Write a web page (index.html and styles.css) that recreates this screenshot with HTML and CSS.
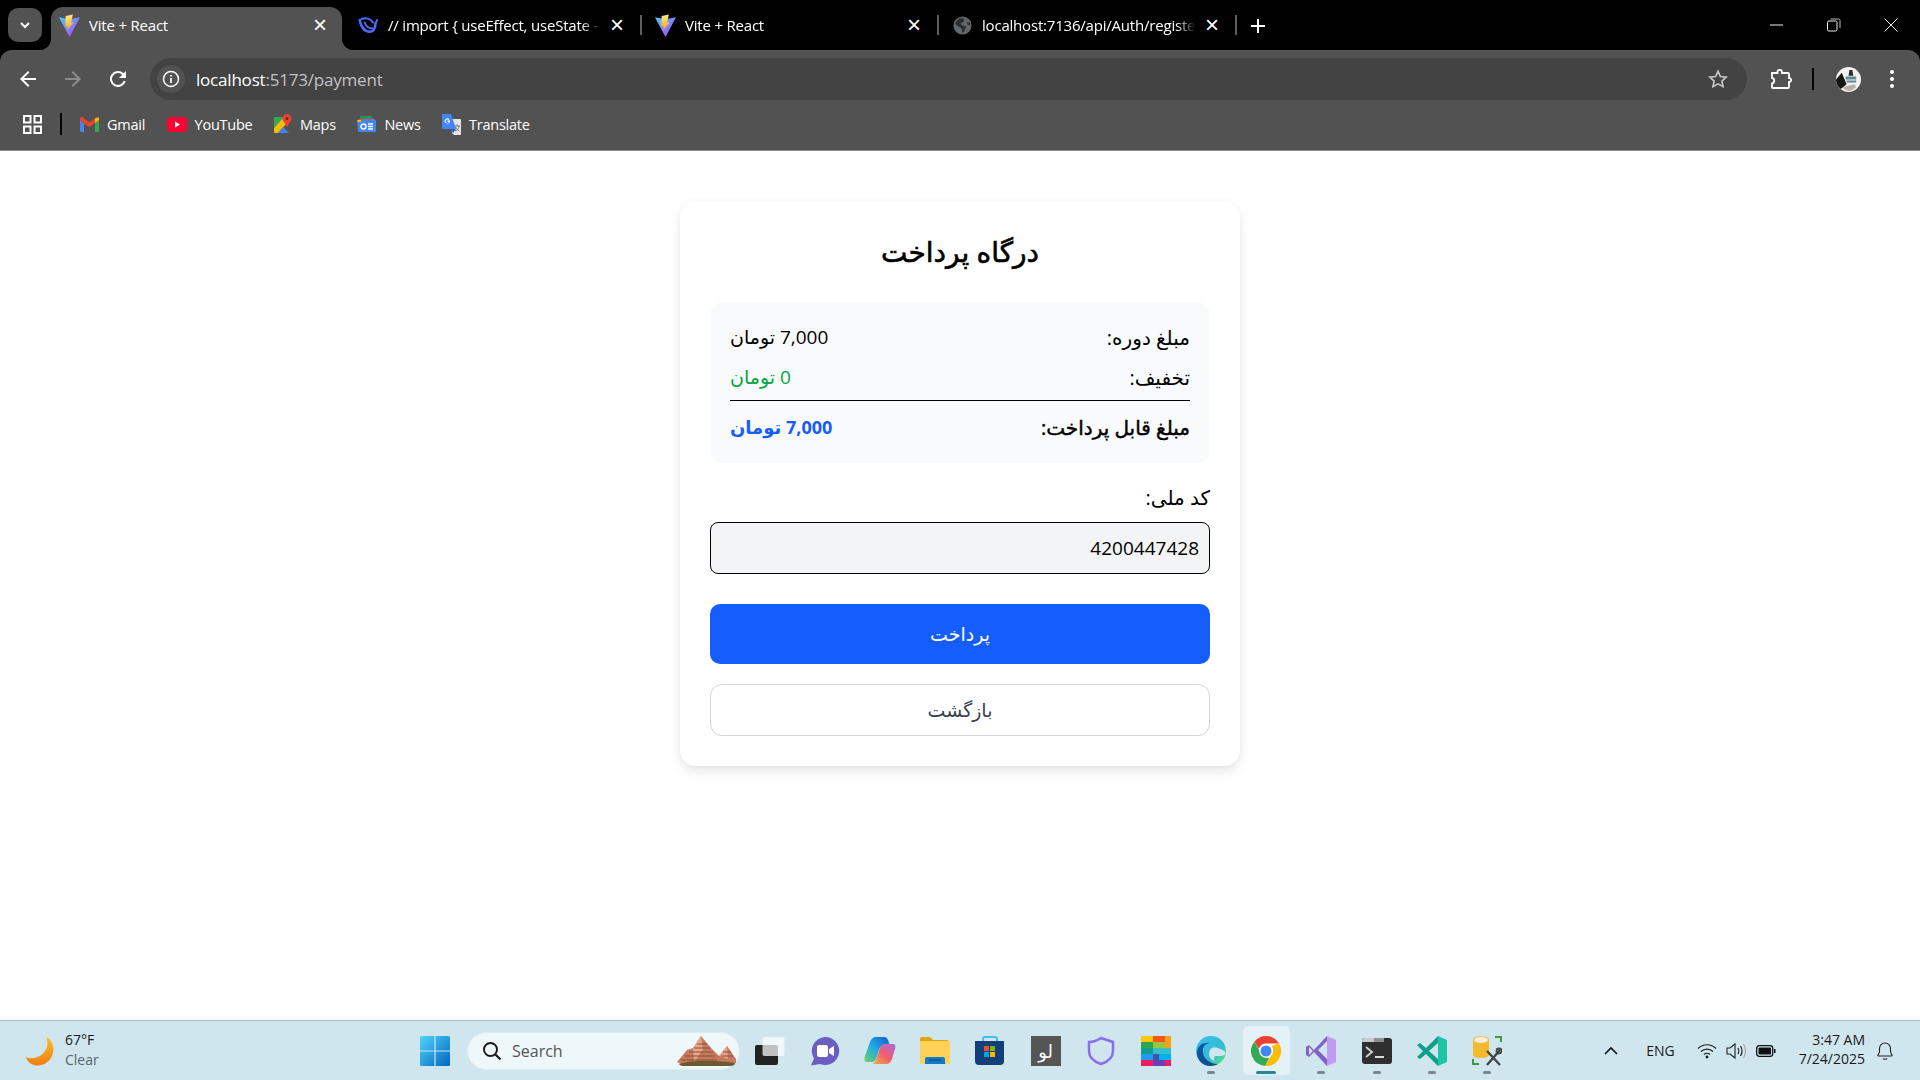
FILE: index.html
```html
<!DOCTYPE html>
<html lang="en">
<head>
    <meta charset="UTF-8">
    <meta name="viewport" content="width=device-width, initial-scale=1.0">
    <title>Vite + React</title>
    <link rel="stylesheet" href="styles.css">
</head>
<body>
    <svg class="defs" width="0" height="0">
        <defs>
            <linearGradient id="viteBody" x1="0" y1="0" x2="1" y2="1">
                <stop offset="0" stop-color="#41d1ff"/>
                <stop offset="1" stop-color="#bd34fe"/>
            </linearGradient>
            <linearGradient id="viteBolt" x1="0" y1="0" x2="0" y2="1">
                <stop offset="0" stop-color="#ffea83"/>
                <stop offset="1" stop-color="#ffa800"/>
            </linearGradient>
            <symbol id="vite" viewBox="0 0 24 24">
                <path d="M1 3.500 12 5.500 23 3.500 12.300 23.500Q12 24 11.700 23.500z" fill="url(#viteBody)"/>
                <path d="M15.500 0.500 8 2 7.600 13 10.200 12.400 9.400 17 16.500 8.500 13.600 9z" fill="url(#viteBolt)"/>
            </symbol>
        </defs>
    </svg>

    <header class="browser">
        <div class="tabstrip">
            <button class="tab-search">
                <svg width="14" height="14" viewBox="0 0 14 14"><path d="M3 5l4 4 4-4" fill="none" stroke="#fff" stroke-width="2"/></svg>
            </button>
            <div class="tab active">
                <svg class="favicon vite-icon" width="23" height="23"><use href="#vite"/></svg>
                <span class="tab-title">Vite + React</span>
                <span class="tab-close">&times;</span>
            </div>
            <div class="tab second">
                <svg class="favicon" width="20" height="20" viewBox="0 0 24 24">
                    <g fill="none" stroke="#4d6bfe" stroke-linecap="round">
                        <path d="M2 6c1 8 6 14 12 14 5 0 7-5 7-10" stroke-width="3"/>
                        <path d="M4 5c5-2 11-1 14 4" stroke-width="2.400"/>
                        <path d="M8 9c2 5 5 7 9 7" stroke-width="2.400"/>
                        <path d="M21 10l2-4" stroke-width="2.400"/>
                    </g>
                </svg>
                <span class="tab-title">// import { useEffect, useState -</span>
                <span class="tab-close">&times;</span>
            </div>
            <div class="tab third">
                <svg class="favicon vite-icon" width="23" height="23"><use href="#vite"/></svg>
                <span class="tab-title">Vite + React</span>
                <span class="tab-close">&times;</span>
            </div>
            <div class="tab fourth">
                <svg class="favicon" width="19" height="19" viewBox="0 0 20 20">
                    <circle cx="10" cy="10" r="9.500" fill="#63666a"/>
                    <path d="M7 2l5 1-1 3-3 2 2 2 4 1-2 5-2 2-1-5-5-3-2-2 3-4zM15 6l3 1 0 3-3-1z" fill="#000" opacity=".55"/>
                </svg>
                <span class="tab-title">localhost:7136/api/Auth/registe</span>
                <span class="tab-close">&times;</span>
            </div>
            <span class="tab-plus">
                <svg width="16" height="16" viewBox="0 0 16 16"><path d="M8 1v14M1 8h14" stroke="#fff" stroke-width="2"/></svg>
            </span>
            <div class="win-controls">
                <svg width="14" height="14" viewBox="0 0 14 14"><path d="M0 7h13" stroke="#eee" stroke-width="1"/></svg>
                <svg width="14" height="14" viewBox="0 0 14 14"><rect x=".5" y="3" width="9.500" height="10" rx="1.500" fill="none" stroke="#eee"/><path d="M3.500 1h8a2 2 0 0 1 1.500 1.500V10" fill="none" stroke="#bbb"/></svg>
                <svg width="14" height="14" viewBox="0 0 14 14"><path d="M.5.500l13 13M13.500.500l-13 13" stroke="#eee" stroke-width="1"/></svg>
            </div>
        </div>

        <div class="toolbar">
            <div class="nav-btns">
                <svg width="24" height="24" viewBox="0 0 24 24"><path d="M20 11H7.800l5.600-5.600L12 4l-8 8 8 8 1.400-1.400L7.800 13H20z" fill="#fff"/></svg>
                <svg width="24" height="24" viewBox="0 0 24 24"><path d="M4 11h12.200l-5.600-5.600L12 4l8 8-8 8-1.400-1.400 5.600-5.600H4z" fill="#8b8b8b"/></svg>
                <svg width="24" height="24" viewBox="0 0 24 24"><path d="M17.650 6.350A8 8 0 1 0 19.730 14h-2.080a6 6 0 1 1-1.410-6.240L13 11h7V4z" fill="#fff"/></svg>
            </div>
            <div class="omnibox">
                <span class="site-info">
                    <svg width="18" height="18" viewBox="0 0 18 18"><circle cx="9" cy="9" r="7.500" fill="none" stroke="#fff" stroke-width="1.500"/><path d="M9 8v5M9 5v1.600" stroke="#fff" stroke-width="1.700"/></svg>
                </span>
                <span class="url"><span class="host">localhost</span>:5173/payment</span>
                <svg class="star" width="22" height="22" viewBox="0 0 24 24"><path d="M12 3.500l2.600 5.800 6.300.7-4.700 4.200 1.300 6.200L12 17.300l-5.500 3.100 1.300-6.200L3.100 10l6.300-.7z" fill="none" stroke="#c7c7c7" stroke-width="1.800"/></svg>
            </div>
            <div class="tool-right">
                <svg width="22" height="22" viewBox="0 0 22 22"><path d="M2 5h5.500V4a2.200 2.200 0 0 1 4.400 0v1H18a1 1 0 0 1 1 1v4.200h1a2 2 0 0 1 0 3.600h-1V19a1 1 0 0 1-1 1H3a1 1 0 0 1-1-1v-3.500a2.800 2.800 0 0 0 0-5.500z" fill="none" stroke="#fff" stroke-width="1.800"/></svg>
                <i class="tool-sep"></i>
                <svg class="avatar" width="25" height="25" viewBox="0 0 26 26">
                    <circle cx="13" cy="13" r="13" fill="#f2f2f0"/>
                    <path d="M0 13L6 6l5 12-6 5Q0 19 0 13z" fill="#151515"/>
                    <path d="M10 10h11v3H10zM11 14h10v2H11z" fill="#5d8b94"/>
                    <path d="M14 3l3 0 1 6h-5z" fill="#2a2a2a"/>
                    <path d="M7 21l12-3 2 3-6 4q-5 0-8-4z" fill="#b9aea8"/>
                </svg>
                <svg width="6" height="20" viewBox="0 0 6 20"><circle cx="3" cy="3" r="2" fill="#fff"/><circle cx="3" cy="10" r="2" fill="#fff"/><circle cx="3" cy="17" r="2" fill="#fff"/></svg>
            </div>
        </div>

        <div class="bookmarks">
            <svg class="apps" width="19" height="19" viewBox="0 0 19 19"><g fill="none" stroke="#fff" stroke-width="2"><rect x="1" y="1" width="6.500" height="6.500"/><rect x="11.500" y="1" width="6.500" height="6.500"/><rect x="1" y="11.500" width="6.500" height="6.500"/><rect x="11.500" y="11.500" width="6.500" height="6.500"/></g></svg>
            <i class="bm-sep"></i>
            <a class="bm">
                <svg width="19" height="15" viewBox="0 0 19 15"><path d="M0 3v10.500A1.500 1.500 0 0 0 1.500 15H4V6z" fill="#4285f4"/><path d="M15 15h2.500a1.500 1.500 0 0 0 1.500-1.500V3l-4 3z" fill="#34a853"/><path d="M4 7L0 3V2c0-1.800 2-2.500 3-1.500L9.500 5.500 16 .5c1-1 3-.3 3 1.500v1l-9.500 7z" fill="#ea4335"/><path d="M15 1.500L19 .5V3l-4 3z" fill="#fbbc04"/></svg>
                Gmail
            </a>
            <a class="bm">
                <svg width="20" height="15" viewBox="0 0 20 15"><rect width="20" height="15" rx="4" fill="#ff0033"/><path d="M8 4.500v6l5-3z" fill="#fff"/></svg>
                YouTube
            </a>
            <a class="bm">
                <svg width="18" height="20" viewBox="0 0 18 20"><path d="M0 3h10L0 14z" fill="#34a853"/><path d="M0 14L10 3l3 6L4 19H1a1 1 0 0 1-1-1z" fill="#fbbc04"/><path d="M4 19l5-6 6 6z" fill="#4285f4"/><path d="M13 0a4.500 4.500 0 0 1 4.500 4.500c0 3-3 4.500-4.500 9-1.500-4.500-4.500-6-4.500-9A4.500 4.500 0 0 1 13 0z" fill="#ea4335"/><circle cx="13" cy="4.500" r="1.600" fill="#8a1f14"/></svg>
                Maps
            </a>
            <a class="bm">
                <svg width="19" height="18" viewBox="0 0 19 18"><path d="M3 1h12v4H3z" fill="#0c9d58"/><path d="M1 4l15-1 3 3-17 2z" fill="#ea4335"/><path d="M0 5l17-1 2 2v10a1 1 0 0 1-1 1H2a1 1 0 0 1-1-1z" fill="#4285f4"/><path d="M0 5h4v2H1z" fill="#fbbc04"/><path d="M11 9h5M11 11.500h5M11 14h5" stroke="#fff" stroke-width="1.300"/><circle cx="6.500" cy="11.500" r="2.500" fill="none" stroke="#fff" stroke-width="1.400"/></svg>
                News
            </a>
            <a class="bm">
                <svg width="19" height="21" viewBox="0 0 19 21"><path d="M9 5h9a1 1 0 0 1 1 1v14a1 1 0 0 1-1 1h-6l-2-2z" fill="#e4e4e4"/><path d="M1 0h8l5 15H1a1 1 0 0 1-1-1V1a1 1 0 0 1 1-1z" fill="#4285f4"/><path d="M9 15h5l-3 4z" fill="#2a56c6"/><path d="M8 6.500H5.500v1.500h1.400c-.2.800-1 1.200-1.700 1a1.800 1.800 0 0 1 0-3.500c.5 0 .9.100 1.200.5l1-1A3 3 0 0 0 2.500 7.500 3 3 0 0 0 8 8z" fill="#fff"/><path d="M12 12h6M15 10.500V12M13 17c3-1 4-3 4-5M13.500 13c1 2 2.500 3 4 4" fill="none" stroke="#777" stroke-width="1"/></svg>
                Translate
            </a>
        </div>
    </header>

    <main class="page">
        <div class="card" dir="rtl">
            <h2 class="card-title">درگاه پرداخت</h2>
            <div class="summary">
                <div class="row">
                    <span class="row-label">مبلغ دوره:</span>
                    <span>7,000 تومان</span>
                </div>
                <div class="row">
                    <span class="row-label">تخفیف:</span>
                    <span class="green">0 تومان</span>
                </div>
                <div class="row total">
                    <span class="row-label">مبلغ قابل پرداخت:</span>
                    <span class="blue">7,000 تومان</span>
                </div>
            </div>
            <label class="field-label" for="nationalCode">کد ملی:</label>
            <input class="field" id="nationalCode" type="text" value="4200447428" readonly>
            <button class="btn-pay">پرداخت</button>
            <button class="btn-back">بازگشت</button>
        </div>
    </main>

    <footer class="taskbar">
        <div class="weather">
            <svg width="30" height="30" viewBox="0 0 30 30">
                <defs><linearGradient id="moon" x1="0" y1="0" x2="0" y2="1"><stop offset="0" stop-color="#fcc02e"/><stop offset="1" stop-color="#ef7d12"/></linearGradient></defs>
                <path d="M21 1c7 3 9 12 6 19-3 7-11 11-18 9-4-1-7-4-8-8 7 3 15 0 19-6 3-5 3-10 1-14z" fill="url(#moon)"/>
            </svg>
            <div class="weather-text">
                <span>67°F</span>
                <span class="muted">Clear</span>
            </div>
        </div>

        <div class="task-center">
            <span class="win-logo">
                <svg width="30" height="30" viewBox="0 0 30 30">
                    <defs><linearGradient id="win" x1="0" y1="0" x2="1" y2="1"><stop offset="0" stop-color="#52d3fb"/><stop offset="1" stop-color="#0067c0"/></linearGradient></defs>
                    <path d="M0 1.500A1.500 1.500 0 0 1 1.500 0h12.900v14.400H0zM15.600 0h12.900A1.500 1.500 0 0 1 30 1.500v12.900H15.600zM0 15.600h14.400V30H1.500A1.500 1.500 0 0 1 0 28.500zM15.600 15.600H30v12.900a1.500 1.500 0 0 1-1.500 1.500H15.600z" fill="url(#win)"/>
                </svg>
            </span>
            <div class="search">
                <svg width="20" height="20" viewBox="0 0 20 20"><circle cx="8.500" cy="8.500" r="6.500" fill="none" stroke="#1a1a1a" stroke-width="2"/><path d="M13 13l5.500 5.500" stroke="#1a1a1a" stroke-width="2.200"/></svg>
                <span class="search-text">Search</span>
                <svg class="search-art" width="60" height="32" viewBox="0 0 60 32">
                    <path d="M0 27L10 15 16 13 24 1l10 12 4 4 4 4 8-10 9 13v4L30 31 6 30z" fill="#c47a5c"/>
                    <path d="M16 13l8-12 2 13-9 14zM42 21l8-10 1 13z" fill="#e6a78b"/>
                    <path d="M20 9h10M17 13h16M12 17h24M8 21h30M4 25h36M46 17h8M44 21h12" stroke="#8f4d38" stroke-width="1"/>
                    <path d="M2 29q20-6 56-1 0 3-5 3H8q-5 0-6-2z" fill="#6b5a32"/>
                </svg>
            </div>
            <span class="task-icon">
                <svg width="30" height="30" viewBox="0 0 30 30"><rect x="0" y="9" width="23" height="20" rx="2" fill="#222"/><rect x="7.500" y="1" width="22" height="19" rx="2" fill="#fff" opacity=".72"/></svg>
            </span>
            <span class="task-icon">
                <svg width="30" height="30" viewBox="0 0 30 30"><path d="M15 1a14 14 0 1 1-5 27L1 29.500l3-7A14 14 0 0 1 15 1z" fill="#6a5fc1"/><rect x="7" y="9" width="11" height="12" rx="2" fill="#fff"/><path d="M19 13l5-3v10l-5-3z" fill="#fff"/></svg>
            </span>
            <span class="task-icon">
                <svg width="32" height="30" viewBox="0 0 32 30">
                    <defs>
                        <linearGradient id="copA" x1="0" y1="1" x2="1" y2="0"><stop offset="0" stop-color="#6cd46a"/><stop offset=".5" stop-color="#1da6e8"/><stop offset="1" stop-color="#1659c9"/></linearGradient>
                        <linearGradient id="copB" x1="0" y1="1" x2="1" y2="0"><stop offset="0" stop-color="#f6b23a"/><stop offset=".5" stop-color="#ee5d71"/><stop offset="1" stop-color="#a76ce6"/></linearGradient>
                    </defs>
                    <path d="M18 1h2c2 0 3 1 4 3l2 6h-6c-3 0-4 1-5 4l-3 9c-1 2-2 3-4 3H2c-2-1-2-3-1-6l5-14C7 3 9 1 12 1z" fill="url(#copA)"/>
                    <path d="M8 28h14c3 0 5-2 6-5l3-10c1-3 0-5-2-5h-8c-3 0-4 1-5 4l-3 9c-1 3-2 6-5 7z" fill="url(#copB)"/>
                </svg>
            </span>
            <span class="task-icon">
                <svg width="30" height="28" viewBox="0 0 30 28"><path d="M0 2a2 2 0 0 1 2-2h8l3 3h15v3H0z" fill="#dfa410"/><path d="M0 4h30v22a1 1 0 0 1-1 1H1a1 1 0 0 1-1-1z" fill="#ffd257"/><path d="M5 27v-5a2 2 0 0 1 2-2h16a2 2 0 0 1 2 2v5z" fill="#0f7cc9"/><path d="M9 23h12" stroke="#0a4f86" stroke-width="1.500"/></svg>
            </span>
            <span class="task-icon">
                <svg width="30" height="30" viewBox="0 0 30 30"><path d="M8 6V3a2 2 0 0 1 2-2h10a2 2 0 0 1 2 2v3" fill="none" stroke="#3fc0ee" stroke-width="2"/><path d="M0 5h29v20a4 4 0 0 1-4 4H4a4 4 0 0 1-4-4z" fill="#123f7a"/><rect x="9" y="10" width="5" height="5" fill="#f25022"/><rect x="15" y="10" width="5" height="5" fill="#7fba00"/><rect x="9" y="16" width="5" height="5" fill="#00a4ef"/><rect x="15" y="16" width="5" height="5" fill="#ffb900"/></svg>
            </span>
            <span class="task-icon">
                <span class="lo-icon"><span dir="rtl" lang="fa">لو</span></span>
            </span>
            <span class="task-icon">
                <svg width="30" height="30" viewBox="0 0 30 30"><path d="M15 2l12 4v9c0 7-6 11-12 13C9 26 3 22 3 15V6c5 0 9-2 12-4z" fill="none" stroke="#8b6cf0" stroke-width="2.500"/></svg>
            </span>
            <span class="task-icon">
                <svg width="30" height="30" viewBox="0 0 5 5" shape-rendering="crispEdges">
                    <path fill="#f9c80e" d="M0 0h2v1H0z"/><path fill="#f2571b" d="M2 0h2v1H2z"/><path fill="#f8a020" d="M4 0h1v1H4z"/>
                    <path fill="#2ea44f" d="M0 1h2v1H0z"/><path fill="#9bc53d" d="M2 1h2v1H2z"/><path fill="#f9a01b" d="M4 1h1v1H4z"/>
                    <path fill="#0e9f8e" d="M0 2h2v1H0z"/><path fill="#35c0c9" d="M2 2h3v1H2z"/>
                    <path fill="#1f9cf0" d="M0 3h2v1H0z"/><path fill="#3f51b5" d="M2 3h1v1H2z"/><path fill="#00b0f0" d="M3 3h2v1H3z"/>
                    <path fill="#ed1c62" d="M0 4h2v1H0z"/><path fill="#6a3fb5" d="M2 4h2v1H2z"/><path fill="#e91e63" d="M4 4h1v1H4z"/>
                </svg>
            </span>
            <span class="task-icon running">
                <svg width="30" height="30" viewBox="0 0 30 30">
                    <defs>
                        <linearGradient id="edgeA" x1="0" y1="0" x2="1" y2="1"><stop offset="0" stop-color="#35c1f1"/><stop offset=".6" stop-color="#33bcd0"/><stop offset="1" stop-color="#66eb6e"/></linearGradient>
                        <linearGradient id="edgeB" x1="0" y1="0" x2="1" y2="1"><stop offset="0" stop-color="#0c59a4"/><stop offset="1" stop-color="#114a8b"/></linearGradient>
                    </defs>
                    <circle cx="15" cy="15" r="15" fill="url(#edgeA)"/>
                    <path d="M1 17C1 9 8 6 14 7c-6 1-8 5-7 10 1 6 7 11 15 11-2 1-5 2-8 2C7 30 1 24 1 17z" fill="url(#edgeB)"/>
                    <path d="M13 18c0-5 4-8 9-6 3 1 7 3 8 5-1 3-5 3-9 3-3 0-4 2-2 5-4-1-6-4-6-7z" fill="#cfe6ee"/>
                </svg>
            </span>
            <span class="task-icon running current">
                <svg width="30" height="30" viewBox="0 0 48 48">
                    <circle cx="24" cy="24" r="24" fill="#fff"/>
                    <path d="M24 0a24 24 0 0 1 20.800 12H24a12 12 0 0 0-11.400 8.200L5.300 9A24 24 0 0 1 24 0z" fill="#ea4335"/>
                    <path d="M5.300 9l11.700 20.200A12 12 0 0 0 29.500 34.700L22.600 47.900A24 24 0 0 1 5.300 9z" fill="#34a853"/>
                    <path d="M44.800 12A24 24 0 0 1 22.600 48l12-20.800A12 12 0 0 0 33 16z" fill="#fbbc04"/>
                    <circle cx="24" cy="24" r="11" fill="#fff"/>
                    <circle cx="24" cy="24" r="8.800" fill="#4285f4"/>
                </svg>
            </span>
            <span class="task-icon running">
                <svg width="30" height="30" viewBox="0 0 30 30"><path d="M21 0l9 4v22l-9 4z" fill="#c09bf0"/><path d="M21 0L8 14 3 9l-3 2v8l3 2 5-5 13 14v-7l-9-9 9-9z" fill="#8661c5"/><path d="M3 11v8l4-4z" fill="#cfe6ee"/></svg>
            </span>
            <span class="task-icon running">
                <svg width="30" height="26" viewBox="0 0 30 26"><rect width="30" height="26" rx="3" fill="#2f2f2f"/><path d="M3 0h9v4H0V3a3 3 0 0 1 3-3z" fill="#c9c9c9"/><path d="M12 0h10v4H12z" fill="#8f8f8f"/><path d="M4 9l6 5-6 5" fill="none" stroke="#ccc" stroke-width="2"/><path d="M13 19h9" stroke="#ddd" stroke-width="2"/></svg>
            </span>
            <span class="task-icon running">
                <svg width="30" height="30" viewBox="0 0 30 30"><path d="M21 0l9 4v22l-9 4z" fill="#20c2a8"/><path d="M21 0L9 12 3 7 0 9l6 6-6 6 3 2 6-5 12 12v-7l-9-8 9-8z" fill="#0fa08a"/></svg>
            </span>
            <span class="task-icon running">
                <svg width="30" height="30" viewBox="0 0 30 30">
                    <path d="M1 4c0-5 16-5 16 0v15c0 4-16 4-16 0z" fill="#f5b92e"/>
                    <ellipse cx="9" cy="4" rx="7" ry="3" fill="#f7efdc"/>
                    <path d="M23 1h6v5M1 23v5h6" fill="none" stroke="#3c9a47" stroke-width="2"/>
                    <path d="M15 15l13 14M28 14l-13 15" stroke="#444" stroke-width="2.400"/>
                    <circle cx="27" cy="15" r="2.500" fill="none" stroke="#444" stroke-width="1.800"/>
                </svg>
            </span>
        </div>

        <div class="tray">
            <svg class="tray-chevron" width="14" height="9" viewBox="0 0 14 9"><path d="M1 8l6-6 6 6" fill="none" stroke="#111" stroke-width="1.600"/></svg>
            <span class="lang">ENG</span>
            <svg width="20" height="16" viewBox="0 0 20 16"><g fill="none" stroke="#1a1a1a" stroke-width="1.200"><path d="M1 5.500c5-5 13-5 18 0"/><path d="M4 8.500c3.500-3.300 8.500-3.300 12 0"/><path d="M7 11.500c1.800-1.500 4.200-1.500 6 0"/></g><circle cx="10" cy="14" r="1.400" fill="#1a1a1a"/></svg>
            <svg width="20" height="18" viewBox="0 0 20 18"><path d="M1 6h3l5-4v14l-5-4H1z" fill="none" stroke="#222" stroke-width="1.100"/><path d="M12 6c1 1.500 1 4.500 0 6M14.500 4c1.800 3 1.800 7 0 10" fill="none" stroke="#222" stroke-width="1.200"/><path d="M17.500 2c2.500 4 2.500 10 0 14" fill="none" stroke="#999" stroke-width="1"/></svg>
            <svg class="battery" width="20" height="12" viewBox="0 0 20 12"><rect x=".7" y=".7" width="16" height="10.600" rx="2.500" fill="none" stroke="#111" stroke-width="1.300"/><rect x="2.500" y="2.500" width="12.500" height="7" rx="1" fill="#111"/><path d="M18 4h1.500v4H18z" fill="#111"/></svg>
            <div class="clock">
                <span>3:47 AM</span>
                <span>7/24/2025</span>
            </div>
            <svg width="18" height="20" viewBox="0 0 18 20"><path d="M2 14c1-1 1.500-2 1.500-4V7.500a5.500 5.500 0 0 1 11 0V10c0 2 .5 3 1.500 4 .5.700 0 1-.5 1h-13c-.5 0-1-.3-.5-1z" fill="none" stroke="#222" stroke-width="1.100"/><path d="M7 17.500c.5 1 3.500 1 4 0" fill="none" stroke="#222" stroke-width="1.100"/></svg>
        </div>
    </footer>
</body>
</html>
```

FILE: styles.css
```css
* {
    box-sizing: border-box;
}
html, body {
    margin: 0;
    height: 100%;
}
body {
    display: flex;
    flex-direction: column;
    height: 1080px;
    overflow: hidden;
    background: #fff;
    font-family: "Open Sans", "DejaVu Sans", sans-serif;
}
.defs {
    position: absolute;
}
svg {
    display: block;
    flex: none;
}

/* browser chrome */
.browser {
    background: #000;
    color: #fff;
}
.tabstrip {
    display: flex;
    align-items: flex-end;
    height: 50px;
    padding-left: 8px;
}
.tab-search {
    display: flex;
    align-items: center;
    justify-content: center;
    align-self: flex-start;
    width: 34px;
    height: 34px;
    margin-top: 8px;
    padding: 0;
    background: #525252;
    border: none;
    border-radius: 10px;
}
.tab {
    position: relative;
    display: flex;
    align-items: center;
    height: 43px;
    padding: 0 14px 7px 9px;
    font-size: 15px;
    letter-spacing: -0.2px;
}
.vite-icon {
    margin-right: -2px;
}
.tab-title {
    flex: 1;
    min-width: 0;
    margin-left: 10px;
    white-space: nowrap;
    -webkit-mask-image: linear-gradient(to left, transparent, #000 20px);
    mask-image: linear-gradient(to left, transparent, #000 20px);
}
.tab-close {
    width: 20px;
    margin-left: 6px;
    font-size: 24px;
    line-height: 24px;
    text-align: center;
    font-family: "Liberation Sans", sans-serif;
}
.tab.active {
    width: 291px;
    margin-left: 9px;
    padding: 0 12px 7px 7px;
    background: #525252;
    border-radius: 12px 12px 0 0;
}
.tab.active .tab-title {
    -webkit-mask-image: none;
    mask-image: none;
}
.tab.active::before,
.tab.active::after {
    content: "";
    position: absolute;
    bottom: 0;
    width: 12px;
    height: 12px;
}
.tab.active::before {
    left: -12px;
    background: radial-gradient(circle at 0 0, #000 12px, #525252 12.5px);
}
.tab.active::after {
    right: -12px;
    background: radial-gradient(circle at 100% 0, #000 12px, #525252 12.5px);
}
.tab.second {
    width: 299px;
    padding-left: 16px;
}
.tab.third {
    width: 297px;
    padding-left: 13px;
}
.tab.fourth {
    width: 298px;
    padding-left: 15px;
}
.tab.second::after,
.tab.third::after,
.tab.fourth::after {
    content: "";
    position: absolute;
    right: -1px;
    top: 8px;
    width: 2px;
    height: 20px;
    background: #5e5e5e;
}
.tab-plus {
    display: flex;
    align-items: center;
    height: 43px;
    padding: 0 0 5px 14px;
}
.win-controls {
    display: flex;
    gap: 43px;
    align-self: flex-start;
    margin: 18px 22px 0 auto;
}
.toolbar {
    display: flex;
    align-items: center;
    height: 50px;
    padding: 8px 0 0 16px;
    background: #525252;
    border-radius: 12px 12px 0 0;
}
.nav-btns {
    display: flex;
    gap: 21px;
    width: 134px;
}
.omnibox {
    display: flex;
    align-items: center;
    flex: none;
    width: 1597px;
    height: 42px;
    padding: 0 18px 0 7px;
    background: #434343;
    border-radius: 21px;
}
.site-info {
    display: flex;
    align-items: center;
    justify-content: center;
    width: 28px;
    height: 28px;
    background: #525252;
    border-radius: 50%;
}
.url {
    flex: 1;
    margin-left: 11px;
    font-size: 17px;
    letter-spacing: -0.2px;
    color: #c2c2c2;
}
.host {
    color: #fff;
}
.tool-right {
    display: flex;
    align-items: center;
    margin-left: 23px;
}
.tool-sep {
    width: 2px;
    height: 22px;
    margin: 0 22px 0 20px;
    background: #000;
}
.avatar {
    margin-right: 28px;
}
.bookmarks {
    display: flex;
    align-items: center;
    height: 51px;
    padding: 0 0 2px 23px;
    background: #525252;
    border-bottom: 1px solid #8a8a8a;
}
.bm-sep {
    width: 2px;
    height: 22px;
    margin: 0 18px;
    background: #000;
}
.bm {
    display: flex;
    align-items: center;
    gap: 8px;
    margin-right: 21.500px;
    font-size: 14.500px;
    letter-spacing: -0.25px;
}

/* payment card */
.page {
    flex: 1;
    padding-top: 50px;
    background: #fff;
}
.card {
    width: 560px;
    margin: 0 auto;
    padding: 30px;
    background: #fff;
    border-radius: 16px;
    box-shadow: 0 6px 14px -2px rgba(0, 0, 0, 0.12), 0 0 6px rgba(0, 0, 0, 0.03);
    color: #000;
}
.card-title {
    margin: 0 0 26px;
    font-size: 28px;
    line-height: 41px;
    padding-bottom: 4px;
    font-weight: 400;
    -webkit-text-stroke: 0.6px #000;
    text-align: center;
}
.summary {
    padding: 15px 20px 11px;
    background: #f9fafb;
    border-radius: 12px;
    font-size: 19px;
}
.row {
    display: flex;
    justify-content: space-between;
    align-items: center;
    height: 40px;
}
.row-label {
    font-size: 20px;
}
.green {
    color: #00a63e;
}
.row.total {
    height: 52px;
    margin-top: 3px;
    padding-top: 1px;
    border-top: 1.500px solid #000;
    font-size: 18px;
    font-weight: 700;
}
.total .row-label {
    font-weight: 400;
    -webkit-text-stroke: 0.45px #000;
}
.blue {
    color: #155dfc;
}
.field-label {
    display: block;
    margin-top: 22px;
    font-size: 20px;
    line-height: 25px;
}
.field {
    display: block;
    width: 100%;
    height: 52px;
    margin-top: 12px;
    padding: 0 10px;
    background: #f3f4f6;
    border: 1.500px solid #000;
    border-radius: 8px;
    font-family: inherit;
    font-size: 19px;
    color: #000;
}
.btn-pay,
.btn-back {
    display: block;
    width: 100%;
    font-family: inherit;
    font-size: 19px;
}
.btn-pay {
    height: 60px;
    margin-top: 30px;
    background: #155dfc;
    border: none;
    border-radius: 10px;
    color: #fff;
}
.btn-back {
    height: 52px;
    margin-top: 20px;
    background: #fff;
    border: 1.500px solid #d1d5dc;
    border-radius: 12px;
    color: #364153;
}

/* taskbar */
.taskbar {
    position: relative;
    display: flex;
    align-items: center;
    height: 60px;
    background: #cfe6ee;
    border-top: 1px solid #a9bcc6;
    color: #1a1a1a;
}
.weather {
    display: flex;
    align-items: center;
    gap: 10px;
    width: 420px;
    padding-left: 25px;
}
.weather-text {
    display: flex;
    flex-direction: column;
    padding-bottom: 2px;
    font-size: 14px;
    line-height: 20px;
}
.muted {
    color: #5b6367;
}
.task-center {
    display: flex;
    align-items: center;
    height: 100%;
}
.win-logo {
    width: 47px;
}
.search {
    display: flex;
    align-items: center;
    width: 273px;
    height: 38px;
    margin-right: 2px;
    padding: 0 2px 0 14px;
    background: #eef7fa;
    border: 1px solid #dcebf0;
    border-radius: 19px;
}
.search-text {
    flex: 1;
    margin-left: 10px;
    font-size: 16px;
    color: #555;
}
.task-icon {
    position: relative;
    display: flex;
    align-items: center;
    justify-content: center;
    width: 55.200px;
    height: 100%;
}
.lo-icon {
    display: flex;
    align-items: center;
    justify-content: center;
    width: 30px;
    height: 30px;
    background: #555;
    color: #fff;
    font-size: 18px;
    white-space: nowrap;
}
.task-icon.running::after {
    content: "";
    position: absolute;
    left: 50%;
    bottom: 6px;
    width: 8px;
    height: 3px;
    margin-left: -4px;
    background: #7a868c;
    border-radius: 2px;
}
.task-icon.current::before {
    content: "";
    position: absolute;
    left: 4px;
    right: 4px;
    top: 5px;
    bottom: 5px;
    background: #e4f2f7;
    border-radius: 5px;
}
.task-icon.current svg {
    position: relative;
}
.task-icon.current::after {
    width: 20px;
    margin-left: -10px;
    background: #2a8597;
}
.tray {
    display: flex;
    align-items: center;
    margin-left: auto;
    padding-right: 26px;
    font-size: 14px;
}
.tray-chevron {
    margin-right: 28px;
}
.lang {
    margin-right: 22px;
}
.tray svg + svg {
    margin-left: 9px;
}
.tray svg.battery {
    margin-left: 10px;
}
.clock {
    display: flex;
    flex-direction: column;
    align-items: flex-end;
    margin: 0 11px 0 23px;
    padding-bottom: 3px;
    line-height: 19px;
}
```
